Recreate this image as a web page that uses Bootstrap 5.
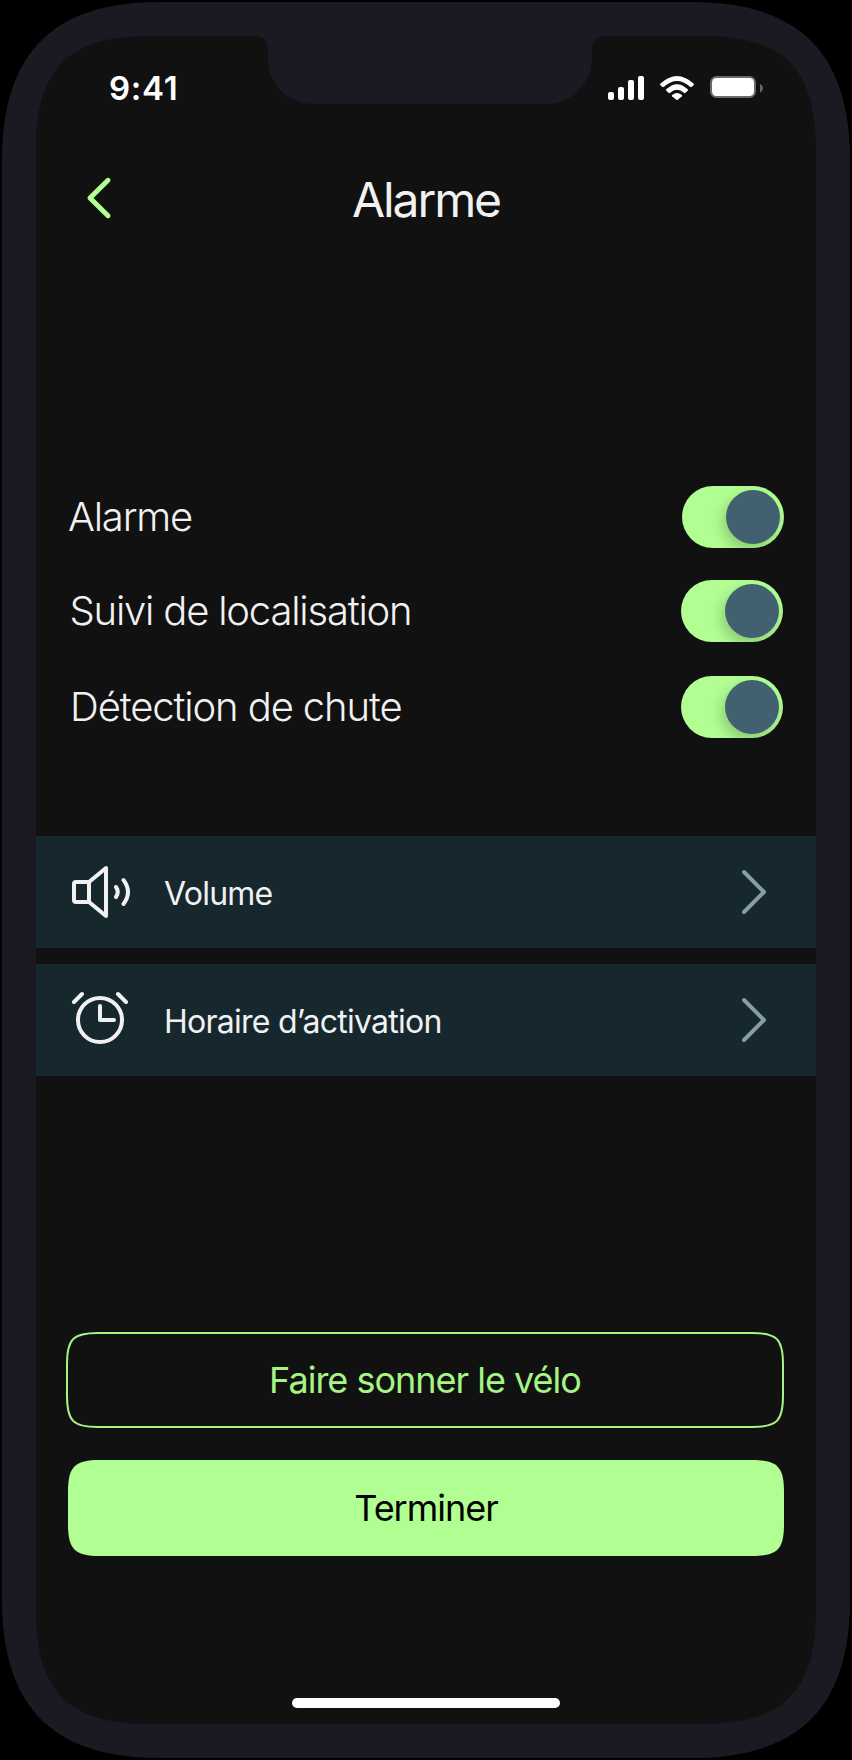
<!DOCTYPE html>
<html lang="fr" data-bs-theme="dark">
<head>
<meta charset="utf-8">
<meta name="viewport" content="width=device-width, initial-scale=1">
<title>Alarme</title>
<link href="https://cdn.jsdelivr.net/npm/bootstrap@5.3.0/dist/css/bootstrap.min.css" rel="stylesheet">
<style>
  body { background: #000; font-family: Inter, "Liberation Sans", sans-serif; color: #f1f1f1; }
  .phone { width: 852px; height: 1760px; padding: 36px; }
  .phone-frame { z-index: 0; }
  .screen { height: 1688px; z-index: 1; }
  .status-bar { height: 104px; padding: 33px 52px 0 73px; }
  .clock { font-size: 33px; font-weight: 600; line-height: 38px; color: #fff; letter-spacing: .7px; }
  .title-bar { height: 120px; padding: 0 50px; }
  .screen-title { font-size: 48px; font-weight: 400; line-height: 60px; letter-spacing: -2.1px; color: #f1f1f1; }
  .back-btn { width: 26px; line-height: 0; margin-bottom: 4px; }
  .options { padding: 226px 32px 0 32px; }
  .option { height: 62px; }
  .option label { font-size: 40px; font-weight: 300; line-height: 62px; letter-spacing: -1.2px; }
  .tracking-row { margin: 32px 1.5px 34px 0; }
  .tracking-row label { padding-left: 1.5px; }
  .fall-row { margin-right: 1.5px; }
  .fall-row label { padding-left: 2px; letter-spacing: -1.12px; }
  .toggle.form-check-input { width: 102px; height: 62px; margin: 0; border: 0; border-radius: 31px; background: #b1ff92; overflow: hidden; padding: 4px; float: none; }
  .toggle.form-check-input::before { content: ""; display: block; width: 54px; height: 54px; margin-left: 40px; border-radius: 50%; background: #42606f; box-shadow: -3px 6px 14px rgba(0,0,0,.22); }
  .menu-list { margin-top: 98px; gap: 16px; --bs-list-group-border-radius: 0; }
  .menu-list .list-group-item { height: 112px; border: 0; background: #16272e; padding: 0 48px 0 34px; color: #f1f1f1; font-size: 32px; line-height: 40px; letter-spacing: -.75px; }
  .menu-text { margin-left: 32px; padding-top: 3px; }
  .actions { margin: 256px 32px 0 30px; gap: 32px; }
  .action { height: 96px; padding: 0; border: 0; font-size: 36px; font-weight: 400; line-height: 96px; letter-spacing: -1px; }
  .action svg { z-index: 0; }
  .action span { z-index: 1; }
  .ring-btn, .ring-btn:hover { color: #a4f584; }
  .done-btn, .done-btn:hover { color: #000; }
  .done-btn { margin-left: 2px; }
  .home-bar { width: 268px; height: 10px; margin-top: 142px; background: #fff; }
</style>
</head>
<body>
<main class="phone position-relative">
  <!-- device body, display area and notch -->
  <svg class="phone-frame position-absolute top-0 start-0" width="852" height="1760" viewBox="0 0 852 1760" aria-hidden="true">
    <path fill="#1b1a23" d="M160 2H692C799 2 850 53 850 160V1600C850 1707 799 1758 692 1758H160C53 1758 2 1707 2 1600V160C2 53 53 2 160 2Z"/>
    <path fill="#111" d="M148 36H256C264 36 268 42 268 50V58C268 84 287 104 314 104H546C573 104 592 82 592 58V50C592 42 596 36 604 36H704C783 36 816 69 816 148V1612C816 1691 783 1724 704 1724H148C69 1724 36 1691 36 1612V148C36 69 69 36 148 36Z"/>
  </svg>

  <div class="screen position-relative d-flex flex-column">
    <header class="status-bar d-flex justify-content-between align-items-start">
      <span class="clock">9:41</span>
      <svg width="158" height="32" viewBox="606 69 158 32" fill="#fff" aria-hidden="true">
        <rect x="608" y="92" width="6" height="8" rx="2"/><rect x="618" y="87" width="6" height="13" rx="2"/><rect x="628" y="80" width="6" height="20" rx="2"/><rect x="638" y="76" width="6" height="24" rx="2"/>
        <path d="M660.5 83.5Q677 68.500 693.500 83.500Q694.300 84.300 693.500 85.200L691.800 86.800Q691 87.500 690 86.700Q677 75.500 664 86.700Q663 87.500 662.200 86.800L660.500 85.200Q659.700 84.300 660.500 83.500Z"/>
        <path d="M666.300 89.300Q677 79 687.700 89.300Q688.500 90 687.700 90.800L685.500 92.800Q684.700 93.500 683.900 92.800Q677 86.500 670.100 92.800Q669.300 93.500 668.500 92.800L666.300 90.800Q665.500 90 666.300 89.300Z"/>
        <path d="M672.200 95Q677 91 681.800 95Q682.500 95.600 681.900 96.300L677.800 99.800Q677 100.400 676.200 99.800L672.100 96.300Q671.500 95.600 672.200 95Z"/>
        <rect x="711" y="77" width="44" height="20" rx="5.500" fill="none" stroke="#6a6a6a" stroke-width="2"/>
        <rect x="712" y="78" width="42" height="18" rx="4.200"/>
        <path fill="#6a6a6a" d="M760 84C763.700 85.500 763.700 91 760 92.500Z"/>
      </svg>
    </header>

    <div class="title-bar d-flex align-items-center justify-content-between">
      <a href="#" class="back-btn" aria-label="Retour"><svg width="26" height="44" viewBox="86 176 26 44" fill="none" stroke="#b1ff92" stroke-width="5" stroke-linecap="round" stroke-linejoin="round"><path d="M108 180.300L90 198L108 215.700"/></svg></a>
      <h1 class="screen-title m-0">Alarme</h1>
      <span class="back-btn"></span>
    </div>

    <form class="options d-flex flex-column">
      <div class="option d-flex align-items-center justify-content-between">
        <label for="alarm">Alarme</label>
        <input class="form-check-input toggle" type="checkbox" role="switch" id="alarm" checked>
      </div>
      <div class="option tracking-row d-flex align-items-center justify-content-between">
        <label for="tracking">Suivi de localisation</label>
        <input class="form-check-input toggle" type="checkbox" role="switch" id="tracking" checked>
      </div>
      <div class="option fall-row d-flex align-items-center justify-content-between">
        <label for="fall">Détection de chute</label>
        <input class="form-check-input toggle" type="checkbox" role="switch" id="fall" checked>
      </div>
    </form>

    <nav class="menu-list list-group">
      <a href="#" class="list-group-item d-flex align-items-center">
        <svg width="62" height="60" viewBox="70 862 62 60" fill="none" stroke="#f1f1f1" stroke-width="4" stroke-linecap="round" stroke-linejoin="round" aria-hidden="true"><path d="M89 882H76Q74 882 74 884V900Q74 902 76 902H89ZM89 882L106 868V916L89 902M116 887Q119.500 892 116 897M123.500 880Q132.500 892 123.500 904"/></svg>
        <span class="menu-text">Volume</span>
        <svg class="ms-auto" width="28" height="48" viewBox="740 868 28 48" fill="none" stroke="#869ca7" stroke-width="4" stroke-linecap="round" stroke-linejoin="round" aria-hidden="true"><path d="M744 872L764 892L744 912"/></svg>
      </a>
      <a href="#" class="list-group-item d-flex align-items-center">
        <svg width="62" height="60" viewBox="70 990 62 60" fill="none" stroke="#f1f1f1" stroke-width="4" stroke-linecap="round" stroke-linejoin="round" aria-hidden="true"><circle cx="100" cy="1020" r="22"/><path d="M100 1006V1020H114M74 1002L82 994M118 994L126 1002"/></svg>
        <span class="menu-text">Horaire d’activation</span>
        <svg class="ms-auto" width="28" height="48" viewBox="740 868 28 48" fill="none" stroke="#869ca7" stroke-width="4" stroke-linecap="round" stroke-linejoin="round" aria-hidden="true"><path d="M744 872L764 892L744 912"/></svg>
      </a>
    </nav>

    <div class="actions d-flex flex-column">
      <button type="button" class="btn action ring-btn position-relative">
        <svg class="position-absolute top-0 start-0" width="718" height="96" viewBox="0 0 718 96" fill="none" stroke="#a4f584" stroke-width="2" aria-hidden="true"><path d="M32 1H686C711 1 717 7 717 32V64C717 89 711 95 686 95H32C7 95 1 89 1 64V32C1 7 7 1 32 1Z"/></svg>
        <span class="position-relative">Faire sonner le vélo</span>
      </button>
      <button type="button" class="btn action done-btn position-relative">
        <svg class="position-absolute top-0 start-0" width="716" height="96" viewBox="0 0 716 96" fill="#b1ff92" aria-hidden="true"><path d="M32 0H684C709.300 0 716 6.700 716 32V64C716 89.300 709.300 96 684 96H32C6.700 96 0 89.300 0 64V32C0 6.700 6.700 0 32 0Z"/></svg>
        <span class="position-relative">Terminer</span>
      </button>
    </div>

    <div class="home-bar rounded-pill mx-auto"></div>
  </div>
</main>
<script src="https://cdn.jsdelivr.net/npm/bootstrap@5.3.0/dist/js/bootstrap.bundle.min.js"></script>
</body>
</html>
